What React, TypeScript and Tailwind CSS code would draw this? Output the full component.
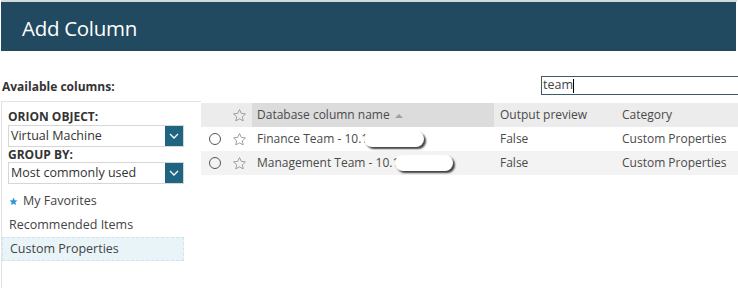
import React from "react";

const Star = ({ className = "" }: { className?: string }) => (
  <svg width="15" height="15" viewBox="0 0 24 24" className={className}>
    <path
      d="M12 2.5l2.9 6.1 6.6.8-4.9 4.6 1.3 6.6L12 17.3l-5.9 3.3 1.3-6.6-4.9-4.6 6.6-.8z"
      fill="none"
      stroke="#999999"
      strokeWidth="1.5"
      strokeLinejoin="round"
    />
  </svg>
);

const Radio = () => (
  <span className="inline-block w-[12px] h-[12px] rounded-full border border-[#555]" />
);

const Chevron = () => (
  <svg width="10" height="6" viewBox="0 0 10 6">
    <path d="M1 1l4 4 4-4" fill="none" stroke="#ffffff" strokeWidth="1.3" />
  </svg>
);

const Select = ({ value }: { value: string }) => (
  <div className="flex h-[22px] w-[176px] border border-[#d6d6d6] bg-white">
    <div className="flex-1 pl-[2px] text-[12.5px] leading-[20px] text-[#333]">{value}</div>
    <div className="w-[18px] bg-[#1f6480] flex items-center justify-center">
      <Chevron />
    </div>
  </div>
);

const Blob = ({ w }: { w: number }) => (
  <span
    className="inline-block h-[16px] rounded-full bg-white shadow-[2px_2px_2px_rgba(0,0,0,0.75)] -ml-[4px]"
    style={{ width: w }}
  />
);

export default function App() {
  return (
    <div
      className="w-[738px] h-[288px] bg-white overflow-hidden relative"
      style={{ fontFamily: '"Open Sans", "Liberation Sans", sans-serif' }}
    >
      <div className="h-[2px] bg-[#d4d9dc] w-[736px] ml-[1px]" />
      <div className="ml-[1px] w-[735px] h-[49px] bg-[#21495f] flex items-center pl-[21px]">
        <span className="text-white text-[20.5px] tracking-[-0.3px] leading-none pt-[4px]">Add Column</span>
      </div>

      <div className="flex items-end h-[50px] pl-[2px]">
        <div className="text-[12px] font-bold text-[#333] pb-[5px]">Available columns:</div>
        <div className="flex-1" />
        <div className="w-[197px] h-[19px] border border-[#3d5a6b] border-r-0 mb-[6px] flex items-center pl-[1px]">
          <span className="text-[12.5px] text-[#444] leading-none">team</span>
          <span className="w-[1px] h-[14px] bg-black" />
        </div>
      </div>

      <div className="flex">
        <div className="w-[200px] h-[188px] border-l border-t border-[#e3e3e3] ml-[1px] pt-[8px]">
          <div className="pl-[6px]">
            <div className="text-[12px] font-bold text-[#333] leading-[14px]">ORION OBJECT:</div>
            <div className="mt-[1px]">
              <Select value="Virtual Machine" />
            </div>
            <div className="text-[12px] font-bold text-[#333] leading-[14px] mt-[1px]">GROUP BY:</div>
            <div>
              <Select value="Most commonly used" />
            </div>
          </div>
          <div className="mt-[5px] pl-[7px] h-[24px] flex items-center text-[12.5px] text-[#444]">
            <svg width="9" height="9" viewBox="0 0 24 24" className="mr-[5px]">
              <path d="M12 1.5l3.2 6.9 7.3.8-5.5 5 1.6 7.3L12 17.8l-6.6 3.7 1.6-7.3-5.5-5 7.3-.8z" fill="#2a9bd1" />
            </svg>
            My Favorites
          </div>
          <div className="pl-[7px] h-[24px] flex items-center text-[12.5px] text-[#444]">Recommended Items</div>
          <div className="w-[182px] h-[24px] flex items-center pl-[7px] text-[12.5px] text-[#444] bg-[#e9f4f9] border border-dashed border-[#cfe3ee]">
            Custom Properties
          </div>
        </div>

        <div className="flex-1 pt-[2px] text-[12px] text-[#4a4a4a]">
          <div className="flex h-[24px] bg-[#ececec] items-center">
            <div className="w-[26px]" />
            <div className="w-[25px] flex items-center justify-center"><Star /></div>
            <div className="w-[242px] h-full bg-[#dcdcdc] flex items-center pl-[5px]">
              Database column name
              <svg width="8" height="5" viewBox="0 0 8 5" className="ml-[5px]">
                <path d="M0 5L4 1 8 5z" fill="#a0a0a0" />
              </svg>
            </div>
            <div className="w-[122px] pl-[6px]">Output preview</div>
            <div className="flex-1 pl-[6px]">Category</div>
          </div>
          <div className="flex h-[24px] bg-white items-center">
            <div className="w-[26px] flex justify-center pl-[1px]"><Radio /></div>
            <div className="w-[25px] flex items-center justify-center"><Star /></div>
            <div className="w-[242px] pl-[5px] flex items-center">
              Finance Team - 10.1<Blob w={60} />
            </div>
            <div className="w-[122px] pl-[6px]">False</div>
            <div className="flex-1 pl-[6px] whitespace-nowrap">Custom Properties</div>
          </div>
          <div className="flex h-[24px] bg-[#f3f3f3] items-center">
            <div className="w-[26px] flex justify-center pl-[1px]"><Radio /></div>
            <div className="w-[25px] flex items-center justify-center"><Star /></div>
            <div className="w-[242px] pl-[5px] flex items-center">
              Management Team - 10.1<Blob w={58} />
            </div>
            <div className="w-[122px] pl-[6px]">False</div>
            <div className="flex-1 pl-[6px] whitespace-nowrap">Custom Properties</div>
          </div>
        </div>
      </div>
    </div>
  );
}
